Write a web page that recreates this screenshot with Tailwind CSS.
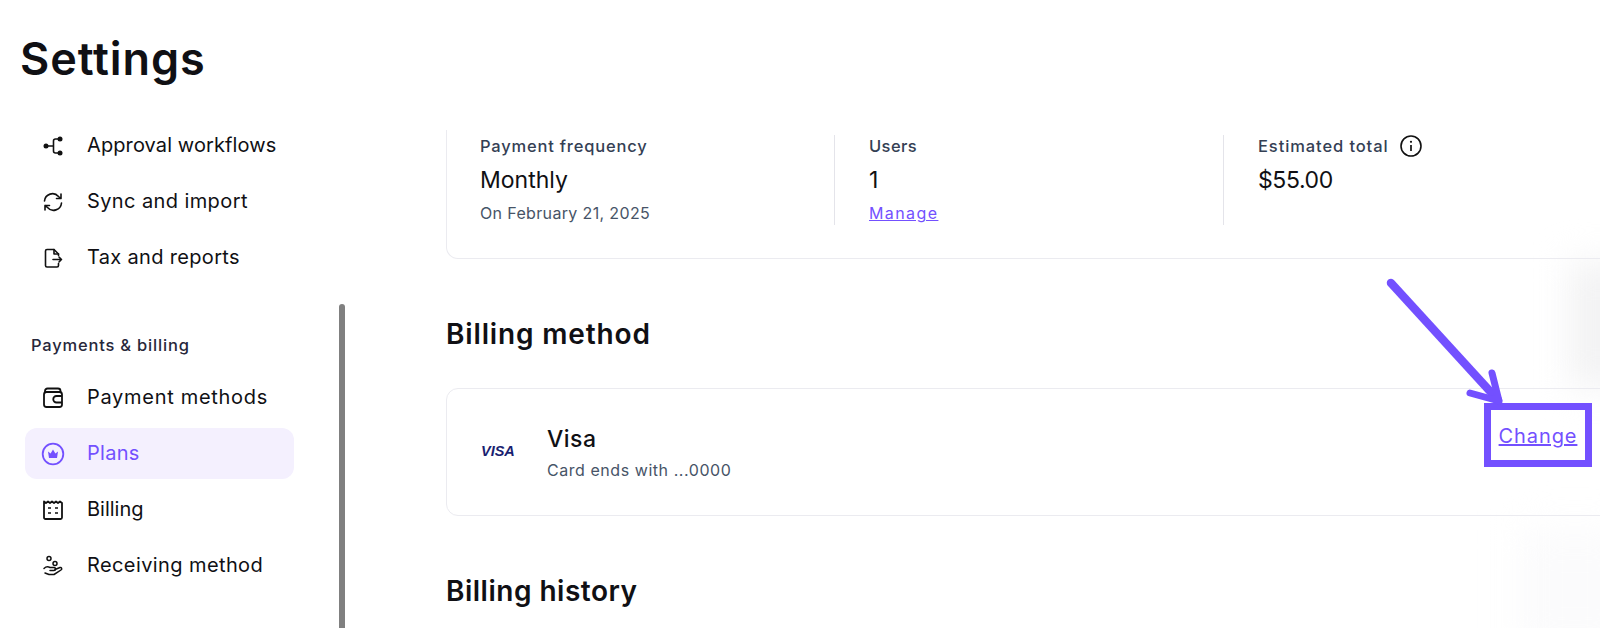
<!DOCTYPE html>
<html lang="en">
<head>
<meta charset="UTF-8">
<title>Settings - Plans</title>
<script src="https://cdn.jsdelivr.net/npm/@tailwindcss/browser@4"></script>
</head>
<body class="bg-white font-['Inter',sans-serif] text-[#101014]">
<div class="relative w-[1600px] h-[628px] overflow-hidden bg-white">
    <!-- soft shadow on the right edge -->
    <div class="absolute right-[-30px] top-[262px] w-[60px] h-[124px] bg-[#f2f2f3] blur-[18px]"></div>
    <div class="absolute right-[-30px] top-[530px] w-[110px] h-[120px] bg-[#fbfbfc] blur-[20px]"></div>

    <header class="relative h-[120px] pl-[20px] pt-[30px]">
        <h1 class="text-[45px] leading-[58px] font-semibold tracking-[0.9px]">Settings</h1>
    </header>

    <div class="relative flex h-[508px]">
        <aside class="flex w-[446px] shrink-0">
            <nav class="w-[339px] shrink-0 pl-[25px] text-[20px]">
                <div class="flex flex-col gap-[5px] w-[269px]">
                    <a class="flex items-center gap-[22px] h-[51px] pl-[16px] rounded-[12px]">
                        <svg width="24" height="24" viewBox="0 0 24 24" fill="none" stroke="#111" stroke-width="1.6">
                            <circle cx="5" cy="12" r="2.5" fill="#111" stroke="none"/>
                            <circle cx="19" cy="5" r="2.5" fill="#111" stroke="none"/>
                            <circle cx="19" cy="19" r="2.5" fill="#111" stroke="none"/>
                            <path d="M5 12H12M19 5H14.5a2 2 0 0 0-2 2V17a2 2 0 0 0 2 2H19"/>
                        </svg>
                        <span class="pb-[2px] tracking-[0.1px]">Approval workflows</span>
                    </a>
                    <a class="flex items-center gap-[22px] h-[51px] pl-[16px] rounded-[12px]">
                        <svg width="24" height="24" viewBox="0 0 24 24" fill="none" stroke="#111" stroke-width="1.6" stroke-linecap="round" stroke-linejoin="round">
                            <path d="M3.5 11a8 8 0 0 1 14-4.5L20 8.5M20 4V8.5H15.5"/>
                            <path d="M20.5 13a8 8 0 0 1-14 4.5L4 15.5M4 20V15.5H8.5"/>
                        </svg>
                        <span class="pb-[2px] tracking-[0.4px]">Sync and import</span>
                    </a>
                    <a class="flex items-center gap-[22px] h-[51px] pl-[16px] rounded-[12px]">
                        <svg width="24" height="24" viewBox="0 0 24 24" fill="none" stroke="#111" stroke-width="1.6" stroke-linecap="round" stroke-linejoin="round">
                            <path d="M17.5 9.5V8L13 3.5H6a1.5 1.5 0 0 0-1.5 1.5V19.5A1.5 1.5 0 0 0 6 21H16a1.5 1.5 0 0 0 1.5-1.5V17.5"/>
                            <path d="M13 3.5V8H17.5"/>
                            <path d="M12 13.5H20.5M18 11L20.5 13.5L18 16"/>
                        </svg>
                        <span class="pb-[2px] tracking-[0.33px]">Tax and reports</span>
                    </a>
                </div>

                <h2 class="mt-[50px] mb-[15px] pl-[6px] text-[16.5px] leading-[24px] font-medium tracking-[0.8px] text-[#27273a]">Payments &amp; billing</h2>

                <div class="flex flex-col gap-[5px] w-[269px]">
                    <a class="flex items-center gap-[22px] h-[51px] pl-[16px] rounded-[12px]">
                        <svg width="24" height="24" viewBox="0 0 24 24" fill="none" stroke="#111" stroke-width="1.8" stroke-linejoin="round">
                            <rect x="3" y="6" width="18" height="15" rx="2.5"/>
                            <path d="M4 6.5V5a2.5 2.5 0 0 1 2.5-2.5H17A2.5 2.5 0 0 1 19.5 5V6"/>
                            <path d="M21 10H15.5a3 3 0 0 0 0 6.5H21"/>
                        </svg>
                        <span class="pb-[2px] tracking-[0.7px]">Payment methods</span>
                    </a>
                    <a class="flex items-center gap-[22px] h-[51px] pl-[16px] rounded-[12px] bg-[#f4f0fe] text-[#7350ff]">
                        <svg width="24" height="24" viewBox="0 0 24 24" fill="none">
                            <circle cx="12" cy="12" r="10.3" stroke="#7350ff" stroke-width="1.8"/>
                            <path d="M7 9.5L9.6 11.5L12 7.5L14.4 11.5L17 9.5L16 16H8Z" fill="#7350ff"/>
                        </svg>
                        <span class="pb-[2px] tracking-[0.3px]">Plans</span>
                    </a>
                    <a class="flex items-center gap-[22px] h-[51px] pl-[16px] rounded-[12px]">
                        <svg width="24" height="24" viewBox="0 0 24 24" fill="none" stroke="#111" stroke-width="1.8" stroke-linejoin="round">
                            <path d="M3 3.5L5 5L7 3.5L9 5L11 3.5L13 5L15 3.5L17 5L19 3.5L21 5V19.5A1.5 1.5 0 0 1 19.5 21H4.5A1.5 1.5 0 0 1 3 19.5Z"/>
                            <path d="M7 10H10M14 10H17M7 15H10M14 15H17" stroke-width="1.6"/>
                        </svg>
                        <span class="pb-[2px]">Billing</span>
                    </a>
                    <a class="flex items-center gap-[22px] h-[51px] pl-[16px] rounded-[12px]">
                        <svg width="24" height="24" viewBox="0 0 24 24" fill="none" stroke="#111" stroke-width="1.5" stroke-linecap="round" stroke-linejoin="round">
                            <circle cx="8" cy="4.5" r="2"/>
                            <circle cx="14" cy="9.5" r="2"/>
                            <path d="M3 14.5C5 12.5 7 12.5 9 13.5H13A1.5 1.5 0 0 1 13 16.5H9"/>
                            <path d="M14 15.5L19 13.5C20.5 13 21.5 15 20 16L13 20.5H8L4 19"/>
                        </svg>
                        <span class="pb-[2px] tracking-[0.4px]">Receiving method</span>
                    </a>
                </div>
            </nav>
            <!-- page scrollbar -->
            <div class="mt-[184px] w-[6px] h-[340px] rounded-t-[3px] bg-[#808080]"></div>
        </aside>

        <main class="w-[1200px] shrink-0 pt-[11px] overflow-hidden">
            <section class="h-[129px] -mt-[1px] border border-t-0 border-[#ebebf0] rounded-b-[12px] overflow-hidden">
                <div class="grid grid-cols-[388px_389px_1fr] pt-[5px]">
                    <div class="h-[90px] pl-[33px] border-r border-[#e4e4ea]">
                        <p class="text-[16.5px] leading-[22px] font-medium tracking-[0.8px] text-[#344054]">Payment frequency</p>
                        <p class="mt-[6px] text-[23px] leading-[34px]">Monthly</p>
                        <p class="mt-[5px] text-[16px] leading-[22px] tracking-[0.35px] text-[#475467]">On February 21, 2025</p>
                    </div>
                    <div class="h-[90px] pl-[34px] border-r border-[#e4e4ea]">
                        <p class="text-[16.5px] leading-[22px] font-medium tracking-[0.4px] text-[#344054]">Users</p>
                        <p class="mt-[6px] text-[23px] leading-[34px]">1</p>
                        <a class="block mt-[5px] text-[16px] leading-[22px] tracking-[1.4px] underline text-[#7350ff]">Manage</a>
                    </div>
                    <div class="h-[90px] pl-[34px]">
                        <p class="flex items-center gap-[11px] text-[16.5px] leading-[22px] font-medium tracking-[0.9px] text-[#344054]">
                            Estimated total
                            <svg width="22" height="22" viewBox="0 0 22 22" fill="none">
                                <circle cx="11" cy="11" r="10" stroke="#111" stroke-width="1.6"/>
                                <circle cx="11" cy="6.8" r="1.1" fill="#111"/>
                                <path d="M11 10V16" stroke="#111" stroke-width="1.7"/>
                            </svg>
                        </p>
                        <p class="mt-[6px] text-[23px] leading-[34px] tracking-[-0.4px]">$55.00</p>
                    </div>
                </div>
            </section>

            <h2 class="mt-[57px] text-[28px] leading-[36px] font-semibold tracking-[0.85px]">Billing method</h2>

            <section class="mt-[36px] h-[128px] border border-[#ebebf0] rounded-[12px] flex pl-[34px] pr-[53px]">
                <div class="flex items-center w-[66px] shrink-0">
                    <span class="font-['Liberation_Sans',sans-serif] text-[14.5px] font-bold italic text-[#1a1f71]">VISA</span>
                </div>
                <div class="flex-1 pt-[35px]">
                    <p class="text-[23px] leading-[30px] font-medium tracking-[0.5px]">Visa</p>
                    <p class="mt-[4px] text-[16px] leading-[24px] tracking-[0.55px] text-[#475467]">Card ends with ...0000</p>
                </div>
                <a class="self-start mt-[14px] h-[64px] w-[108px] pt-[2px] border-[7px] border-[#7350ff] flex items-center justify-center text-[20px] tracking-[0.9px] underline text-[#7350ff]">Change</a>
            </section>

            <h2 class="mt-[57px] text-[28px] leading-[36px] font-semibold tracking-[0.5px]">Billing history</h2>
        </main>
    </div>

    <!-- annotation arrow pointing at the Change link -->
    <svg class="absolute left-[1380px] top-[275px]" width="130" height="135" viewBox="0 0 130 135" fill="none" stroke="#7350ff" stroke-width="8.5" stroke-linecap="round" stroke-linejoin="round">
        <path d="M11 8L118 125"/>
        <path d="M112 98L119 126L90 118" stroke-width="7"/>
    </svg>
</div>
</body>
</html>
